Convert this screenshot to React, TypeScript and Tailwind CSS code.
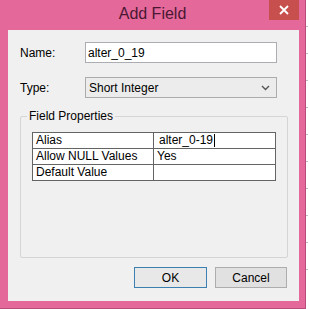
import React from "react";

const font = { fontFamily: '"Liberation Sans", Arial, sans-serif' };

export default function App() {
  return (
    <div className="w-[309px] h-[309px] flex bg-white overflow-hidden text-[12px] text-black" style={font}>
      <div className="w-[306px] h-[309px] flex flex-col bg-[#e4689a] border-r border-b border-[#b94d79] relative">
        <div className="h-[30px] flex items-center justify-center text-[16px] text-[#4a1733] pb-[2px]">Add Field</div>
        <button className="absolute top-0 right-[6px] w-[30px] h-[20px] bg-[#c7504f] flex items-center justify-center text-white">
          <svg width="10" height="10" viewBox="0 0 10 10">
            <path d="M1 1 L9 9 M9 1 L1 9" stroke="white" strokeWidth="1.8" />
          </svg>
        </button>
        <div className="ml-[8px] w-[291px] h-[271px] bg-[#f0f0f0] flex flex-col px-[12px] pt-[12px]">
          <div className="flex items-center h-[21px]">
            <span className="w-[65px]">Name:</span>
            <div className="w-[192px] h-[21px] bg-white border border-[#abadb3] flex items-center px-[2px]">alter_0_19</div>
          </div>
          <div className="flex items-center h-[21px] mt-[14px]">
            <span className="w-[65px]">Type:</span>
            <div className="w-[192px] h-[21px] bg-[#ececec] border border-[#acacac] flex items-center justify-between px-[3px]">
              <span>Short Integer</span>
              <svg width="9" height="6" viewBox="0 0 9 6" className="mr-[3px]">
                <path d="M1 1 L4.5 4.5 L8 1" stroke="#555" strokeWidth="1.4" fill="none" />
              </svg>
            </div>
          </div>
          <div className="relative mt-[18px] w-[268px] h-[142px] border border-[#d5d5d5] rounded-[2px] px-[11px] pt-[15px]">
            <span className="absolute -top-[8px] left-[6px] bg-[#f0f0f0] px-[2px] leading-[14px]">Field Properties</span>
            <div className="w-[244px] bg-white border border-[#646464] flex flex-col">
              <div className="flex h-[16px] border-b border-[#646464]">
                <div className="w-[121px] border-r border-[#646464] pl-[3px] leading-[15px]">Alias</div>
                <div className="flex-1 pl-[5px] leading-[15px] flex items-center">
                  alter_0-19<span className="inline-block w-[1px] h-[13px] bg-black ml-[1px]" />
                </div>
              </div>
              <div className="flex h-[16px] border-b border-[#646464]">
                <div className="w-[121px] border-r border-[#646464] pl-[3px] leading-[15px]">Allow NULL Values</div>
                <div className="flex-1 pl-[3px] leading-[15px]">Yes</div>
              </div>
              <div className="flex h-[15px]">
                <div className="w-[121px] border-r border-[#646464] pl-[3px] leading-[15px]">Default Value</div>
                <div className="flex-1" />
              </div>
            </div>
          </div>
          <div className="flex justify-end gap-[8px] mt-[9px]">
            <button className="w-[73px] h-[21px] bg-[#e8e8e8] border border-[#3c7fb1] text-[12px]">OK</button>
            <button className="w-[72px] h-[21px] bg-[#e1e1e1] border border-[#adadad] text-[12px]">Cancel</button>
          </div>
        </div>
      </div>
      <div className="flex-1 h-full flex flex-col">
        {[28, 60, 88, 120, 148, 178, 206, 236, 264, 292].map((y, i) => (
          <div key={i} className="h-[1px] bg-[#bfbfbf] mt-[26px] w-[2px]" />
        ))}
      </div>
    </div>
  );
}
